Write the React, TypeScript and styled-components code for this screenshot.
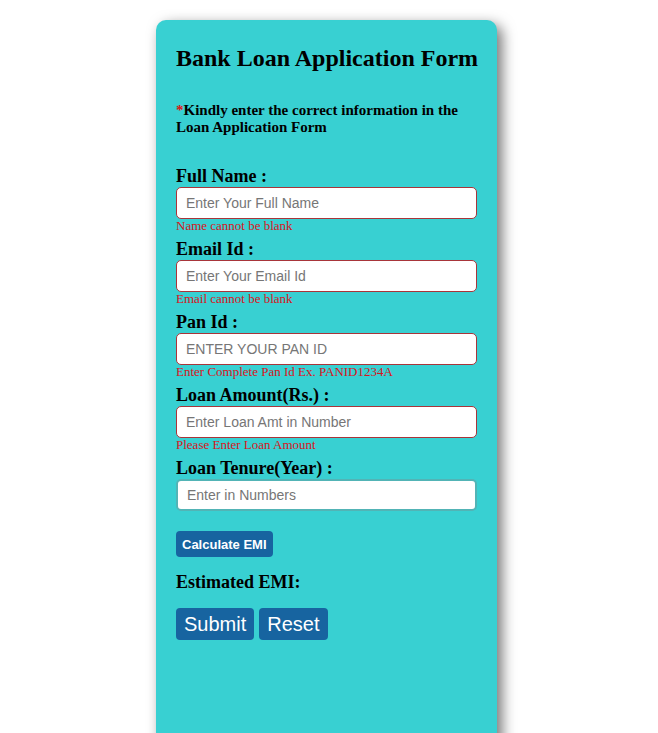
import React from "react";
import styled, { createGlobalStyle } from "styled-components";

const Global = createGlobalStyle`
  html, body { margin: 0; padding: 0; background: #fff; overflow: hidden; }
  body { font-family: "Liberation Serif", "Times New Roman", serif; }
`;

const Page = styled.div`
  display: flex;
  justify-content: center;
  padding: 20px 5px 0 0;
`;

const Card = styled.form`
  width: 341px;
  height: 760px;
  box-sizing: border-box;
  padding: 25px 20px 20px;
  background: #38d0d2;
  border-radius: 10px;
  box-shadow: 5px 5px 14px rgba(0, 0, 0, 0.55);
  display: flex;
  flex-direction: column;
`;

const Title = styled.h2`
  margin: 0;
  font-size: 24px;
  font-weight: bold;
  color: #000;
  white-space: nowrap;
`;

const Note = styled.h4`
  margin: 30px 0 0;
  font-size: 15px;
  line-height: 17px;
  font-weight: bold;
  color: #000;
`;

const Star = styled.span`
  color: #e01010;
`;

const Fields = styled.div`
  margin-top: 30px;
  display: flex;
  flex-direction: column;
`;

const Field = styled.div`
  display: flex;
  flex-direction: column;
  margin-bottom: 6px;
`;

const Label = styled.label`
  font-size: 18px;
  font-weight: bold;
  line-height: 20px;
  color: #000;
  margin-bottom: 1px;
`;

const Input = styled.input<{ $error?: boolean }>`
  box-sizing: border-box;
  width: 100%;
  height: 32px;
  padding: 0 9px;
  border: ${(p) => (p.$error ? "1px solid #a8353a" : "2px solid #52b4b6")};
  border-radius: 5px;
  background: #fff;
  font-family: "Liberation Sans", Arial, sans-serif;
  font-size: 14px;
  outline: none;
  &::placeholder { color: #767676; }
`;

const Error = styled.span`
  font-size: 13px;
  line-height: 14px;
  color: #d8141c;
`;

const SmallButton = styled.button`
  align-self: flex-start;
  margin-top: 14px;
  height: 26px;
  padding: 0 6px;
  border: none;
  border-radius: 4px;
  background: #1764a0;
  color: #fff;
  font-family: "Liberation Sans", Arial, sans-serif;
  font-size: 13px;
  font-weight: bold;
`;

const Emi = styled.h3`
  margin: 15px 0 0;
  font-size: 18px;
  line-height: 20px;
  font-weight: bold;
  color: #000;
`;

const Actions = styled.div`
  display: flex;
  gap: 5px;
  margin-top: 16px;
`;

const BigButton = styled.button`
  height: 32px;
  padding: 0 8px;
  border: none;
  border-radius: 4px;
  background: #1764a0;
  color: #fff;
  font-family: "Liberation Sans", Arial, sans-serif;
  font-size: 20px;
`;

const fields = [
  { label: "Full Name :", ph: "Enter Your Full Name", err: "Name cannot be blank" },
  { label: "Email Id :", ph: "Enter Your Email Id", err: "Email cannot be blank" },
  { label: "Pan Id :", ph: "ENTER YOUR PAN ID", err: "Enter Complete Pan Id Ex. PANID1234A" },
  { label: "Loan Amount(Rs.) :", ph: "Enter Loan Amt in Number", err: "Please Enter Loan Amount" },
  { label: "Loan Tenure(Year) :", ph: "Enter in Numbers", err: "" },
];

export default function App() {
  return (
    <>
      <Global />
      <Page>
        <Card onSubmit={(e) => e.preventDefault()}>
          <Title>Bank Loan Application Form</Title>
          <Note>
            <Star>*</Star>Kindly enter the correct information in the Loan Application Form
          </Note>
          <Fields>
            {fields.map((f) => (
              <Field key={f.label}>
                <Label>{f.label}</Label>
                <Input $error={!!f.err} placeholder={f.ph} />
                {f.err && <Error>{f.err}</Error>}
              </Field>
            ))}
          </Fields>
          <SmallButton type="button">Calculate EMI</SmallButton>
          <Emi>Estimated EMI:</Emi>
          <Actions>
            <BigButton type="submit">Submit</BigButton>
            <BigButton type="reset">Reset</BigButton>
          </Actions>
        </Card>
      </Page>
    </>
  );
}
